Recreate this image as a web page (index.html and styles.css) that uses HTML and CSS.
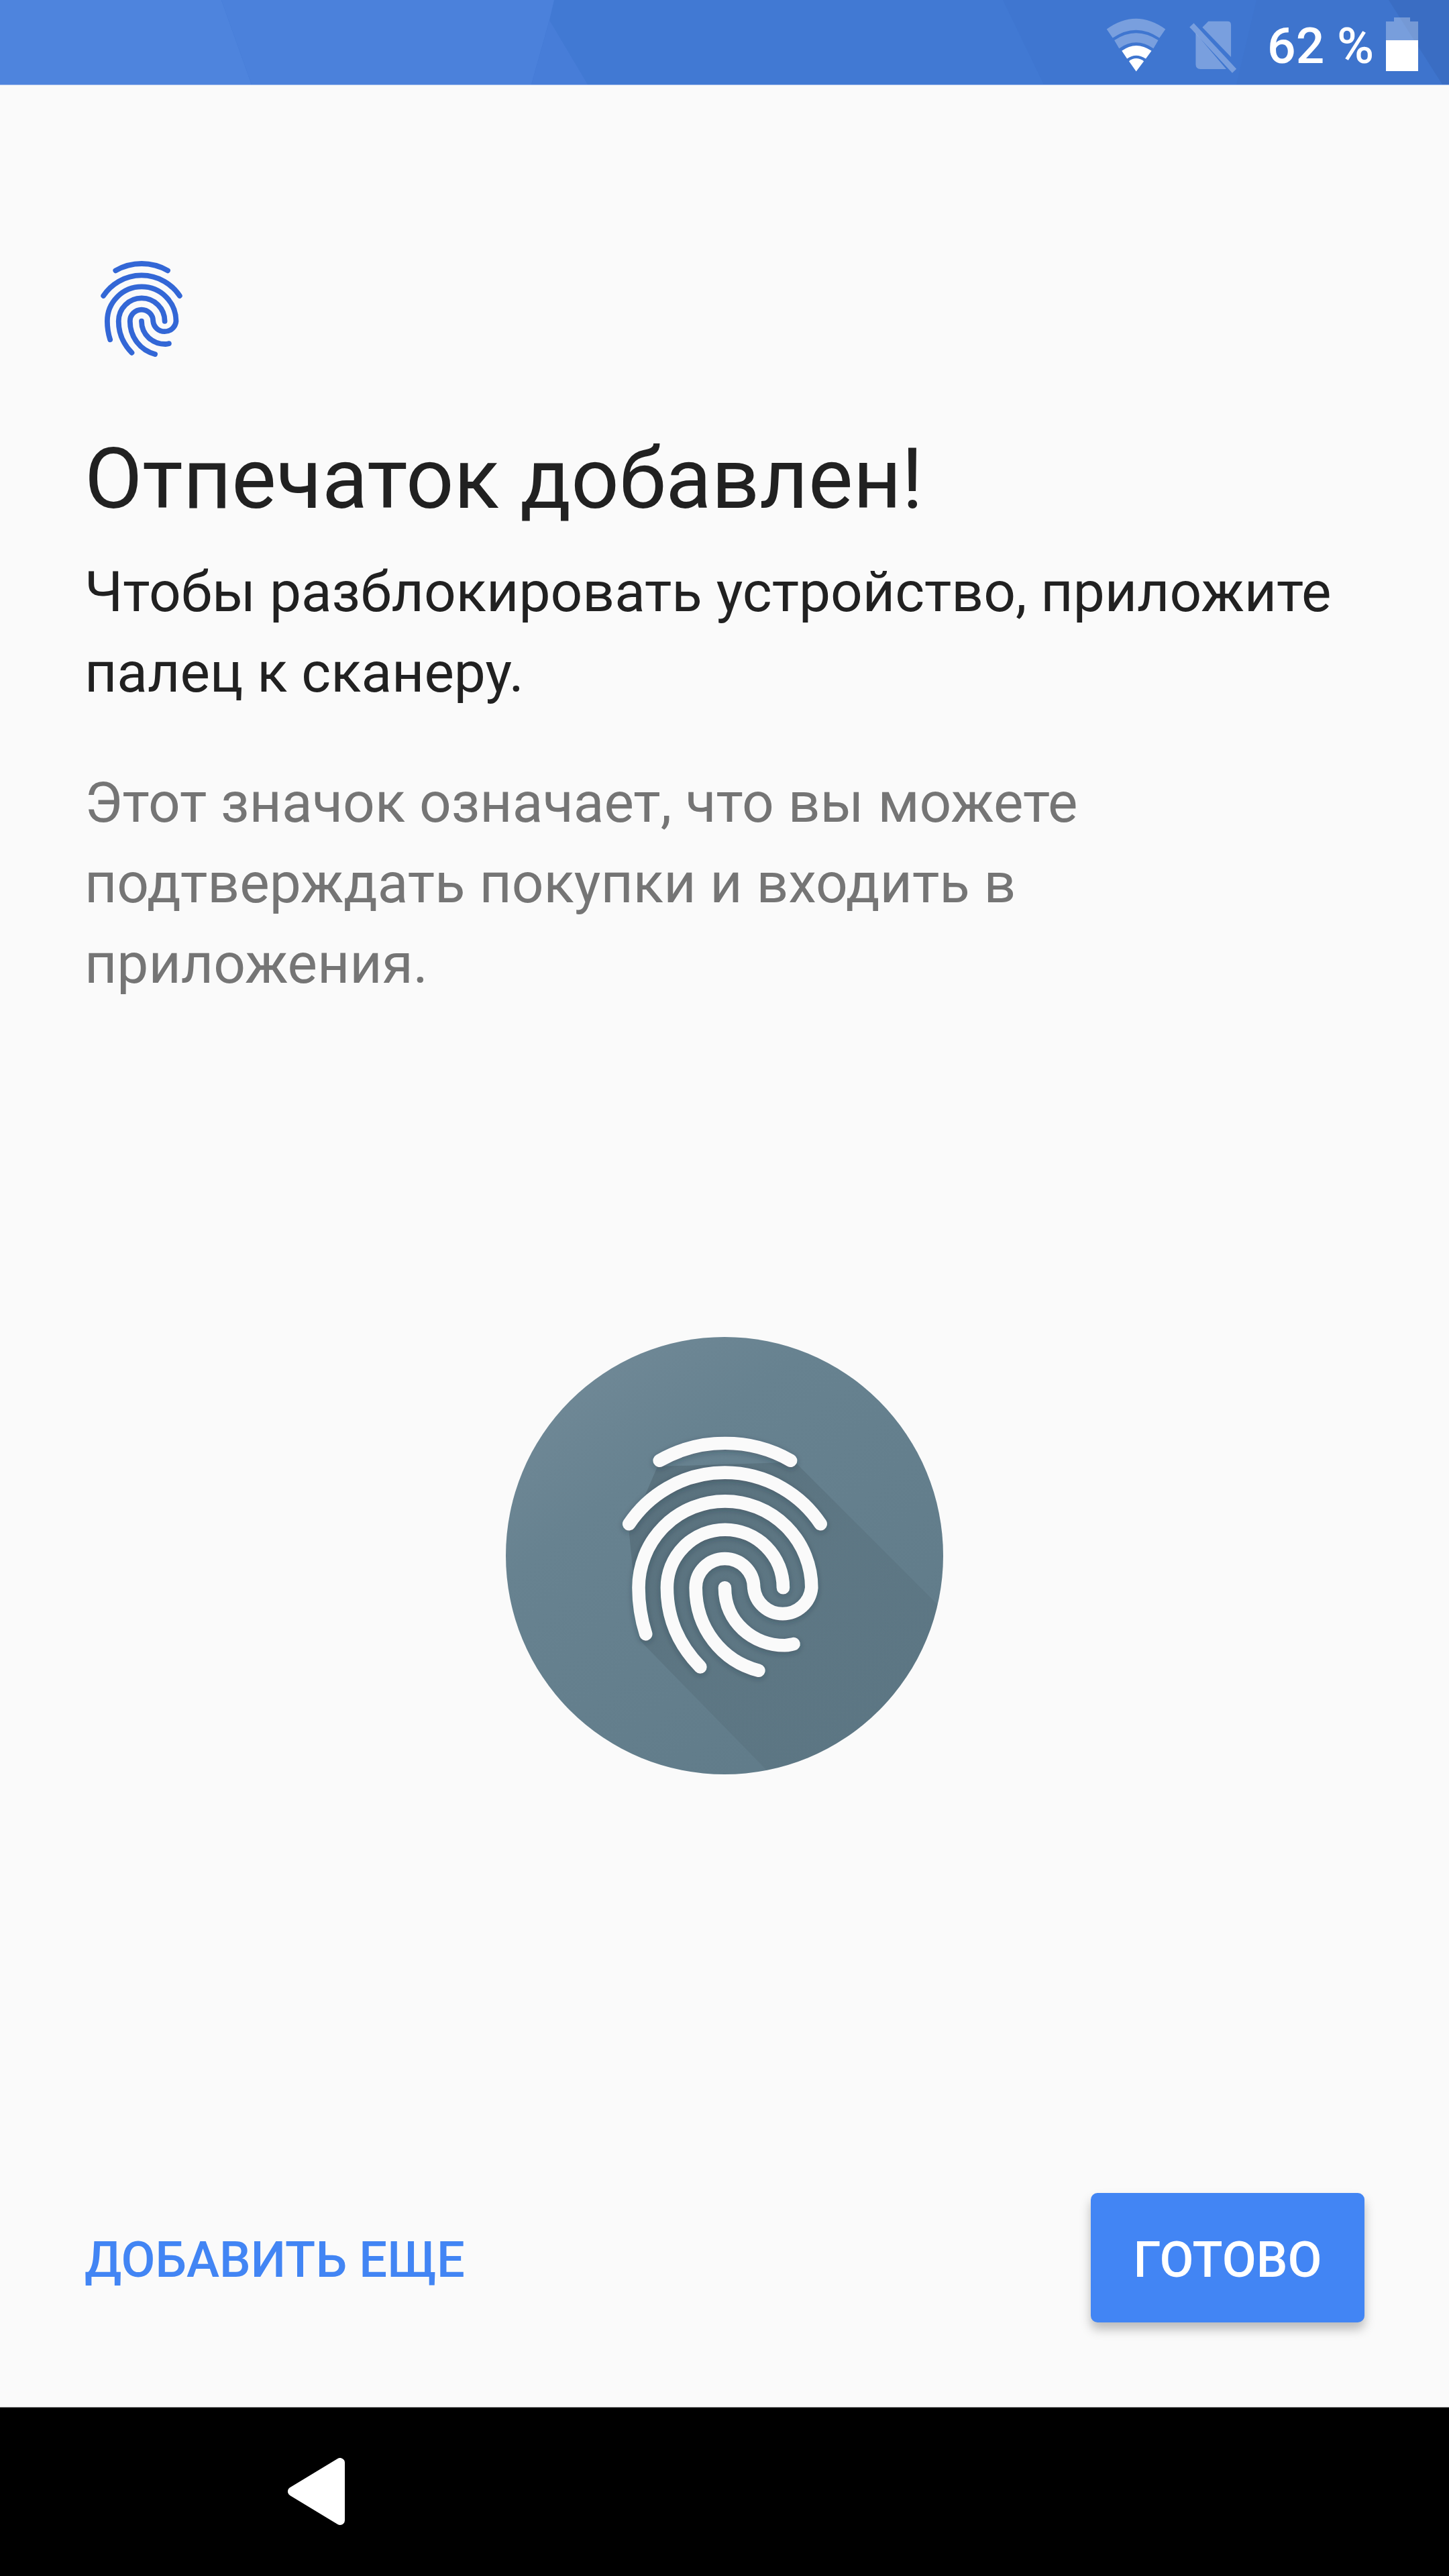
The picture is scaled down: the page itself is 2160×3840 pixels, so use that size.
FILE: index.html
```html
<!DOCTYPE html>
<html lang="ru">
<head>
    <meta charset="UTF-8">
    <meta name="viewport" content="width=device-width, initial-scale=1.0">
    <title>Отпечаток добавлен</title>
    <link rel="stylesheet" href="styles.css">
</head>
<body>

<svg class="defs" width="0" height="0">
    <symbol id="fingerprint" viewBox="430 380 710 810">
        <g fill="none" stroke="currentColor" stroke-width="44" stroke-linecap="round" stroke-linejoin="round">
            <path d="M567 460 A442 442 0 0 1 1005 460"/>
            <path d="M465 672 A384 384 0 0 1 1105 672"/>
            <path d="M521 1040 C505 990 497 940 497 885 A289 289 0 0 1 1075 885 A97 97 0 0 1 882 885 A97 97 0 0 0 688 885 C688 1020 775 1130 898 1162"/>
            <path d="M703 1150 C630 1075 592 985 592 885 A194 194 0 0 1 980 885"/>
            <path d="M785 885 C785 1000 880 1078 985 1078 C998 1078 1005 1075 1015 1073"/>
        </g>
    </symbol>
</svg>

<div class="status-bar">
    <svg class="status-facets" viewBox="0 0 2160 126" preserveAspectRatio="none">
        <rect width="2160" height="126" fill="#4179d3"/>
        <polygon points="0,0 330,0 375,126 0,126" fill="#4e84dd"/>
        <polygon points="330,0 826,0 819,30 792,126 375,126" fill="#4b81db"/>
        <polygon points="819,30 876,126 792,126" fill="#477dd8"/>
        <polygon points="1495,0 1873,0 1843,126 1556,126" fill="#3f76d0"/>
        <polygon points="1873,0 2070,0 2150,126 1843,126" fill="#3e74cd"/>
        <polygon points="2070,0 2160,0 2160,126 2150,126" fill="#3a6dc3"/>
    </svg>
    <svg class="icon-wifi" viewBox="130 70 265 235">
        <path d="M140 122 Q262 34 385 122 L360 158 Q262 92 165 158 Z" fill="#fff" fill-opacity="0.3"/>
        <path d="M172 168 Q262 108 355 168 L335 202 Q262 152 192 202 Z" fill="#fff" fill-opacity="0.3"/>
        <path d="M203 212 Q262 168 327 212 L303 245 Q262 218 225 245 Z" fill="#fff"/>
        <path d="M233 255 Q262 232 295 255 L263 298 Z" fill="#fff"/>
    </svg>
    <svg class="icon-sim" viewBox="480 85 205 225">
        <path d="M540 115 L565 90 H645 Q660 90 660 105 V240 Z" fill="#fff" fill-opacity="0.3"/>
        <path d="M512 140 V270 Q512 290 532 290 H640 Z" fill="#fff" fill-opacity="0.3"/>
        <path d="M495 106 L674 298" stroke="#fff" stroke-opacity="0.3" stroke-width="24"/>
    </svg>
    <span class="battery-text">62 %</span>
    <div class="battery">
        <div class="battery-cap"></div>
        <div class="battery-body">
            <div class="battery-level"></div>
        </div>
    </div>
</div>

<div class="content">
    <svg class="small-icon"><use href="#fingerprint"/></svg>
    <h1>Отпечаток добавлен!</h1>
    <p class="lead">Чтобы разблокировать устройство, приложите палец к сканеру.</p>
    <p class="note">Этот значок означает, что вы можете подтверждать покупки и входить в приложения.</p>

    <div class="hero">
        <svg class="hero-circle" viewBox="53 47 1462 1462">
            <defs>
                <linearGradient id="discFill" x1="0.15" y1="0.1" x2="0.8" y2="0.95">
                    <stop offset="0" stop-color="#6f8896"/>
                    <stop offset="0.25" stop-color="#678290"/>
                    <stop offset="1" stop-color="#607b89"/>
                </linearGradient>
                <linearGradient id="longShadow" gradientUnits="userSpaceOnUse" x1="600" y1="600" x2="1300" y2="1300">
                    <stop offset="0" stop-color="#263238" stop-opacity="0.2"/>
                    <stop offset="0.5" stop-color="#263238" stop-opacity="0.1"/>
                    <stop offset="1" stop-color="#263238" stop-opacity="0.07"/>
                </linearGradient>
                <clipPath id="discClip"><circle cx="784" cy="778" r="731"/></clipPath>
                <filter id="ridgeBlur" x="-10%" y="-10%" width="120%" height="120%">
                    <feGaussianBlur stdDeviation="9"/>
                </filter>
            </defs>
            <circle cx="784" cy="778" r="731" fill="url(#discFill)"/>
            <g clip-path="url(#discClip)">
                <polygon points="1020,465 2000,1445 2000,1900 1320,1900 500,1060 465,700 560,480" fill="url(#longShadow)"/>
            </g>
            <use href="#fingerprint" x="430" y="386" width="710" height="810" class="hero-shadow" filter="url(#ridgeBlur)"/>
            <use href="#fingerprint" x="430" y="380" width="710" height="810" class="hero-print"/>
        </svg>
    </div>

    <div class="actions">
        <button class="btn-text">ДОБАВИТЬ ЕЩЕ</button>
        <button class="btn-done">ГОТОВО</button>
    </div>
</div>

<div class="nav-bar">
    <svg class="nav-back" viewBox="0 0 85 100">
        <polygon points="7,50 78,7 78,93" fill="#fff" stroke="#fff" stroke-width="14" stroke-linejoin="round"/>
    </svg>
</div>

</body>
</html>
```

FILE: styles.css
```css
html, body {
    margin: 0;
    padding: 0;
}

body {
    width: 2160px;
    height: 3840px;
    display: flex;
    flex-direction: column;
    overflow: hidden;
    font-family: Roboto, "Noto Sans", sans-serif;
    background: #fafafa;
}

.defs {
    position: absolute;
}

.status-bar {
    position: relative;
    height: 127px;
    flex: none;
    display: flex;
    align-items: flex-start;
    padding-left: 1646px;
    box-sizing: border-box;
    border-bottom: 1px solid #a3bdec;
    color: #fff;
}

.status-facets {
    position: absolute;
    top: 0;
    left: 0;
    width: 100%;
    height: 100%;
}

.icon-wifi {
    position: relative;
    width: 95px;
    height: 84px;
    margin: 25px 30px 0 0;
    flex: none;
}

.icon-sim {
    position: relative;
    width: 73px;
    height: 80px;
    margin: 30px 45px 0 0;
    flex: none;
}

.battery-text {
    position: relative;
    font-size: 75px;
    line-height: 136px;
    font-weight: 500;
    white-space: nowrap;
    width: 177px;
    flex: none;
}

.battery {
    position: relative;
    width: 48px;
    height: 80px;
    margin-top: 26px;
    display: flex;
    flex-direction: column;
    align-items: center;
}

.battery-cap {
    width: 24px;
    height: 6px;
    background: rgba(255, 255, 255, 0.3);
}

.battery-body {
    flex: 1;
    width: 100%;
    display: flex;
    align-items: flex-end;
    background: rgba(255, 255, 255, 0.3);
}

.battery-level {
    width: 100%;
    height: 46px;
    background: #fff;
}

.content {
    flex: 1;
    display: flex;
    flex-direction: column;
    padding: 0 126px;
    min-height: 0;
}

.small-icon {
    width: 126px;
    height: 146px;
    margin: 261px 0 0 22px;
    color: #3367d6;
    flex: none;
}

h1 {
    margin: 111px 0 0;
    font-size: 125.5px;
    line-height: 140px;
    font-weight: 400;
    color: #212121;
}

.lead {
    margin: 37px 0 0;
    font-size: 83.8px;
    line-height: 120px;
    color: #212121;
}

.note {
    margin: 74px 0 0;
    font-size: 83.8px;
    line-height: 120px;
    color: #757575;
}

.hero {
    display: flex;
    justify-content: center;
    margin-top: 497px;
}

.hero-circle {
    width: 652px;
    height: 652px;
    overflow: visible;
}

.hero-print {
    color: #fafafa;
}

.hero-shadow {
    color: rgba(38, 50, 56, 0.3);
}

.actions {
    margin-top: auto;
    margin-bottom: 126px;
    display: flex;
    justify-content: space-between;
    align-items: center;
}

button {
    border: none;
    font-family: inherit;
    font-weight: 500;
    font-size: 74px;
    cursor: pointer;
}

.btn-text {
    padding: 5px 0 0;
    background: none;
    color: #4285f4;
}

.btn-done {
    width: 408px;
    height: 193px;
    padding: 5px 0 0;
    border-radius: 10px;
    background: #4285f4;
    color: #fff;
    box-shadow: 0 10px 16px rgba(0, 0, 0, 0.26);
}

.nav-bar {
    height: 252px;
    flex: none;
    background: #000;
    box-sizing: border-box;
    border-top: 1px solid #8a8a8a;
    padding: 75px 0 0 429px;
}

.nav-back {
    display: block;
    width: 85px;
    height: 100px;
}
```
